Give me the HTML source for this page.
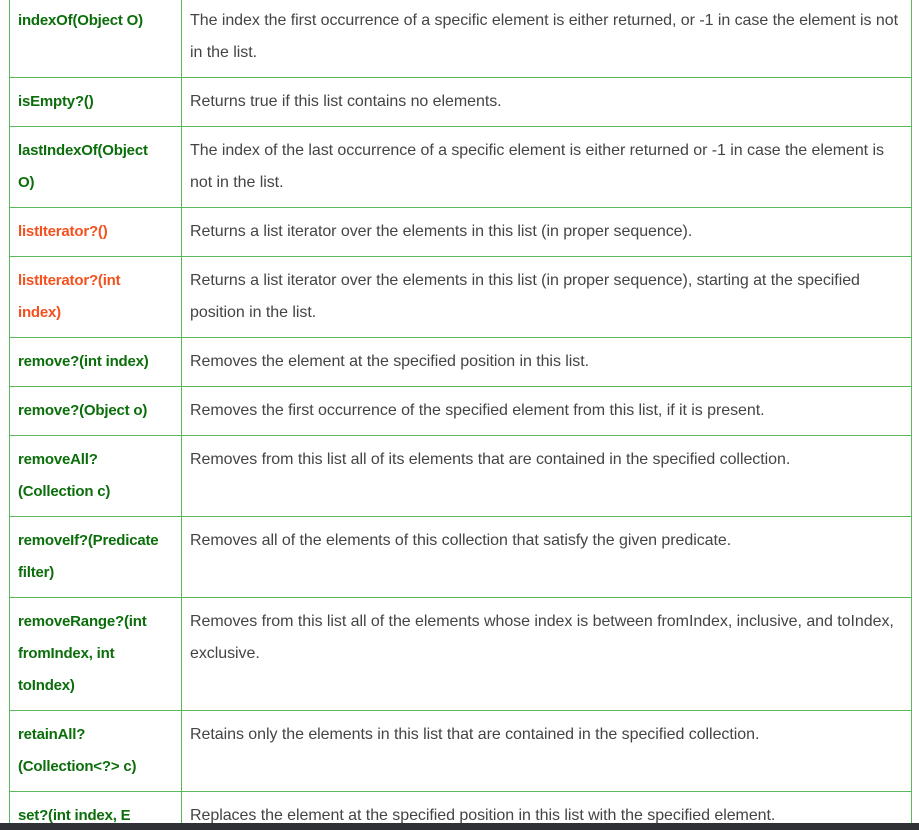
<!DOCTYPE html>
<html><head><style>
html,body{margin:0;padding:0;background:#fff;width:919px;height:830px;overflow:hidden;position:relative}
table{position:absolute;left:9px;top:-4px;border-collapse:collapse;table-layout:fixed;width:903px;font-family:"Liberation Sans",sans-serif;font-size:15px;line-height:32px;color:#444;white-space:nowrap}
td{border:1px solid #5cb85c;padding:8px 8px;vertical-align:top;overflow:hidden}
td:first-child{font-weight:bold;color:#0b6e0b;letter-spacing:-0.2px}
td.o{color:#f4511e}
td:last-child{font-size:16px;letter-spacing:-0.05px}
.bar{position:absolute;left:0;top:823px;width:919px;height:7px;background:#2f3136}
</style></head><body>
<table>
<colgroup><col style="width:172px"><col></colgroup>
<tr><td>indexOf(Object O)</td><td>The index the first occurrence of a specific element is either returned, or -1 in case the element is not<br>in the list.</td></tr>
<tr><td>isEmpty?()</td><td>Returns true if this list contains no elements.</td></tr>
<tr><td>lastIndexOf(Object<br>O)</td><td>The index of the last occurrence of a specific element is either returned or -1 in case the element is<br>not in the list.</td></tr>
<tr><td class="o">listIterator?()</td><td>Returns a list iterator over the elements in this list (in proper sequence).</td></tr>
<tr><td class="o">listIterator?(int<br>index)</td><td>Returns a list iterator over the elements in this list (in proper sequence), starting at the specified<br>position in the list.</td></tr>
<tr><td>remove?(int index)</td><td>Removes the element at the specified position in this list.</td></tr>
<tr><td>remove?(Object o)</td><td>Removes the first occurrence of the specified element from this list, if it is present.</td></tr>
<tr><td>removeAll?<br>(Collection c)</td><td>Removes from this list all of its elements that are contained in the specified collection.</td></tr>
<tr><td>removeIf?(Predicate<br>filter)</td><td>Removes all of the elements of this collection that satisfy the given predicate.</td></tr>
<tr><td>removeRange?(int<br>fromIndex, int<br>toIndex)</td><td>Removes from this list all of the elements whose index is between fromIndex, inclusive, and toIndex,<br>exclusive.</td></tr>
<tr><td>retainAll?<br>(Collection&lt;?&gt; c)</td><td>Retains only the elements in this list that are contained in the specified collection.</td></tr>
<tr><td>set?(int index, E<br>element)</td><td>Replaces the element at the specified position in this list with the specified element.</td></tr>
</table>
<div class="bar"></div>
</body></html>
